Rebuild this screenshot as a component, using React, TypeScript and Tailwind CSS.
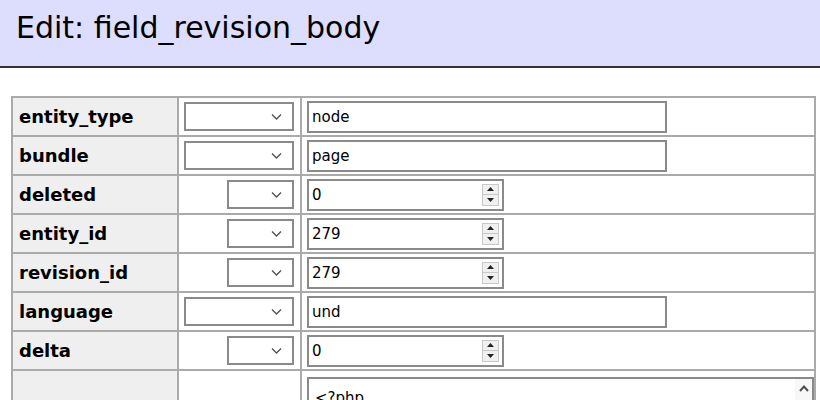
import React from 'react';

type Row = {
  label: string;
  value: string;
  kind: 'text' | 'number';
};

const rows: Row[] = [
  { label: 'entity_type', value: 'node', kind: 'text' },
  { label: 'bundle', value: 'page', kind: 'text' },
  { label: 'deleted', value: '0', kind: 'number' },
  { label: 'entity_id', value: '279', kind: 'number' },
  { label: 'revision_id', value: '279', kind: 'number' },
  { label: 'language', value: 'und', kind: 'text' },
  { label: 'delta', value: '0', kind: 'number' },
];

function Chevron() {
  return (
    <svg width="11" height="7" viewBox="0 0 11 7" className="absolute right-[10px] top-1/2 -translate-y-1/2">
      <path d="M1 1l4.5 4.5L10 1" fill="none" stroke="#505050" strokeWidth="1.3" />
    </svg>
  );
}

function SelectBox({ small }: { small: boolean }) {
  return (
    <div
      className={
        'relative ml-auto h-[29px] border-2 border-[#8a8a8a] bg-white ' + (small ? 'w-[67px]' : 'w-[110px]')
      }
    >
      <Chevron />
    </div>
  );
}

function Spinner() {
  return (
    <div className="absolute right-[3px] top-[3px] bottom-[3px] flex w-[17px] flex-col border border-[#c8c8c8] bg-[#f0f0f0]">
      <div className="flex flex-1 items-center justify-center border-b border-[#c8c8c8]">
        <svg width="7" height="4" viewBox="0 0 7 4">
          <path d="M0 4L3.5 0L7 4Z" fill="#222" />
        </svg>
      </div>
      <div className="flex flex-1 items-center justify-center">
        <svg width="7" height="4" viewBox="0 0 7 4">
          <path d="M0 0L3.5 4L7 0Z" fill="#222" />
        </svg>
      </div>
    </div>
  );
}

function ValueBox({ row }: { row: Row }) {
  const wide = row.kind === 'text';
  return (
    <div
      className={
        'relative h-[32px] border-2 border-[#8a8a8a] bg-white pl-[3px] text-[15px] leading-[28px] text-black ' +
        (wide ? 'w-[360px]' : 'w-[197px]')
      }
    >
      {row.value}
      {!wide && <Spinner />}
    </div>
  );
}

export default function App() {
  return (
    <div className="h-[400px] w-[820px] overflow-hidden bg-white font-['DejaVu_Sans',sans-serif]">
      {/* Header */}
      <div className="h-[68px] border-b-2 border-[#333] bg-[#ddddfd] pl-[16px] pt-[8px]">
        <h1 className="text-[30px] leading-[40px] text-black">Edit: field_revision_body</h1>
      </div>

      {/* Edit form */}
      <div className="pl-[11px] pt-[28px]">
        <table className="w-[805px] border-separate border-spacing-0 border border-[#aaa]">
          <tbody>
            {rows.map((row) => (
              <tr key={row.label} className="h-[39px]">
                <td className="w-[166px] border border-[#aaa] bg-[#efefef] px-[6px] align-middle text-[18px] font-bold">
                  {row.label}
                </td>
                <td className="w-[123px] border border-[#aaa] pr-[6px] align-middle">
                  <SelectBox small={row.kind === 'number'} />
                </td>
                <td className="border border-[#aaa] pl-[5px] align-middle">
                  <ValueBox row={row} />
                </td>
              </tr>
            ))}
            <tr className="h-[120px]">
              <td className="border border-[#aaa] bg-[#efefef]" />
              <td className="border border-[#aaa]" />
              <td className="border border-[#aaa] pl-[5px] pt-[6px] align-top">
                <div className="relative h-[110px] w-[507px] border-2 border-[#8a8a8a] bg-white pl-[6px] pt-[8px] text-[15px] text-black">
                  &lt;?php
                  <div className="absolute right-0 top-0 bottom-0 flex w-[17px] justify-center bg-[#f7f7f7] pt-[6px]">
                    <svg width="10" height="7" viewBox="0 0 10 7">
                      <path d="M1 6l4-4.5L9 6" fill="none" stroke="#505050" strokeWidth="2" />
                    </svg>
                  </div>
                </div>
              </td>
            </tr>
          </tbody>
        </table>
      </div>
    </div>
  );
}
